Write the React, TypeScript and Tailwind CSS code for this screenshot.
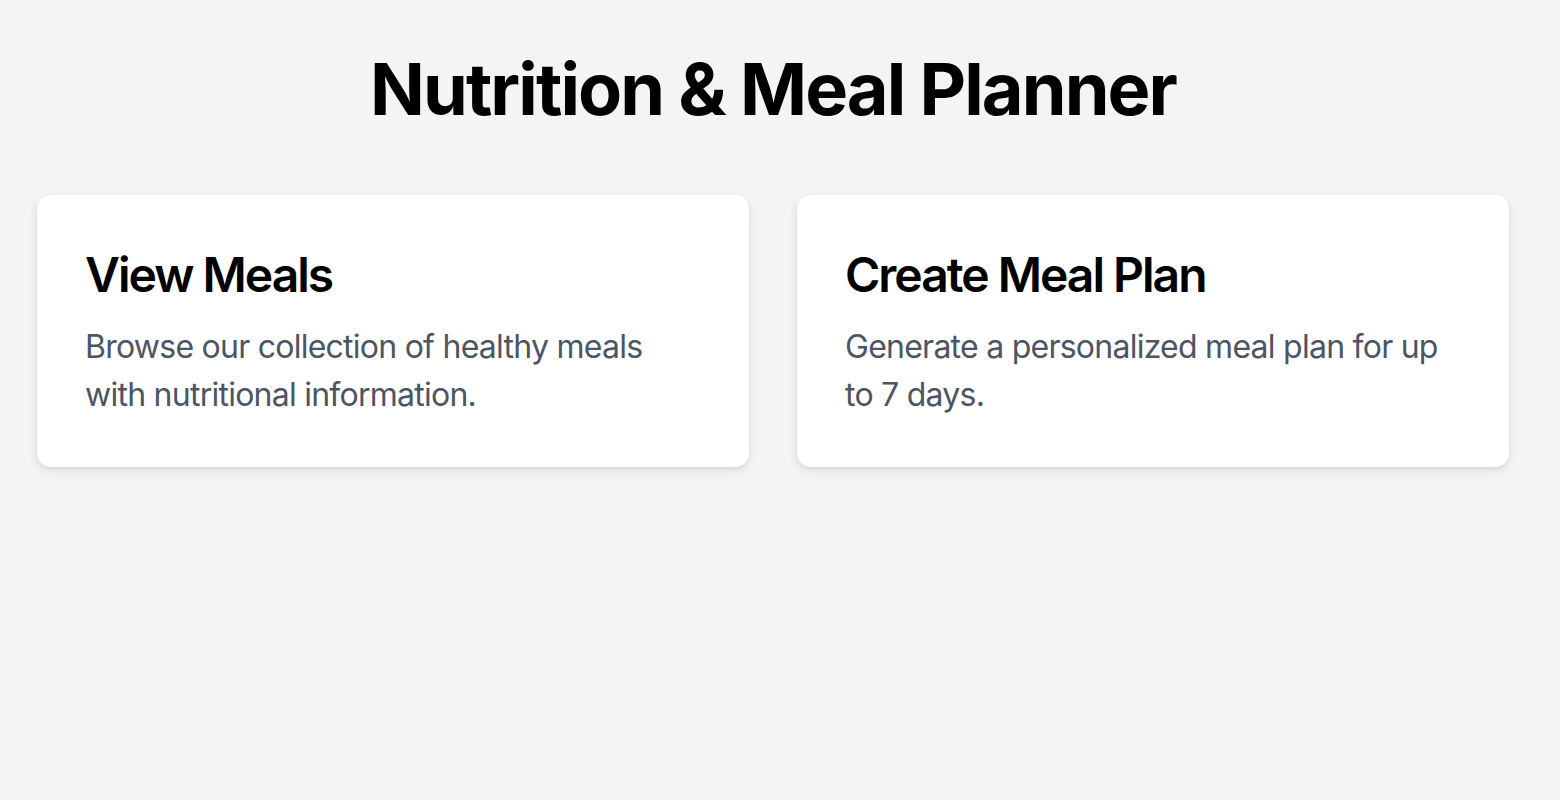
const cards = [
  {
    title: "View Meals",
    text: "Browse our collection of healthy meals with nutritional information.",
  },
  {
    title: "Create Meal Plan",
    text: "Generate a personalized meal plan for up to 7 days.",
  },
];

export default function App() {
  return (
    <div className="min-h-screen bg-[#f3f4f6] font-['Inter',sans-serif] pt-[49px] pl-[37px]">
      <div className="w-[1472px]">
        <h1 className="text-center text-[72px] leading-[80px] font-bold text-black tracking-[-1.9px] mb-[66px]">
          Nutrition &amp; Meal Planner
        </h1>
        <div className="grid grid-cols-2 gap-12">
          {cards.map((card) => (
            <div
              key={card.title}
              className="bg-white rounded-[14px] p-12 shadow-[0_4px_12px_rgba(0,0,0,0.08),0_2px_4px_rgba(0,0,0,0.06)]"
            >
              <h2 className="text-[48px] leading-[64px] font-semibold tracking-[-2px] text-black mb-4">
                {card.title}
              </h2>
              <p className="text-[32px] leading-[48px] tracking-[-0.75px] text-[#4b5563]">{card.text}</p>
            </div>
          ))}
        </div>
      </div>
    </div>
  );
}
